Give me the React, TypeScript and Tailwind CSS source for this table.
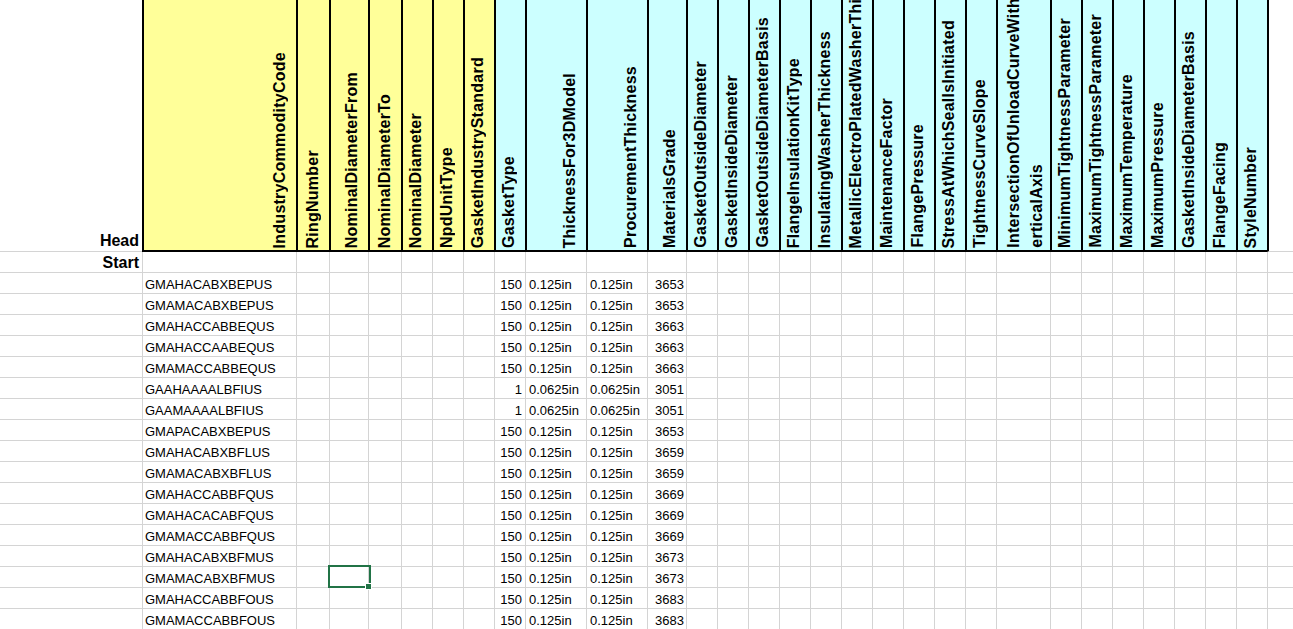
import React from 'react';

type Col = { w: string; title?: string; title2?: string; bg?: string; edge?: boolean };

const Y = 'bg-[#ffff99]';
const C = 'bg-[#ccffff]';

const cols: Col[] = [
  { w: 'w-[142px]' },
  { w: 'w-[154px]', title: 'IndustryCommodityCode', bg: Y },
  { w: 'w-[33px]', title: 'RingNumber', bg: Y },
  { w: 'w-[39px]', title: 'NominalDiameterFrom', bg: Y },
  { w: 'w-[33px]', title: 'NominalDiameterTo', bg: Y },
  { w: 'w-[31px]', title: 'NominalDiameter', bg: Y },
  { w: 'w-[31px]', title: 'NpdUnitType', bg: Y },
  { w: 'w-[31px]', title: 'GasketIndustryStandard', bg: Y },
  { w: 'w-[31px]', title: 'GasketType', bg: C },
  { w: 'w-[61px]', title: 'ThicknessFor3DModel', bg: C },
  { w: 'w-[61px]', title: 'ProcurementThickness', bg: C },
  { w: 'w-[39px]', title: 'MaterialsGrade', bg: C },
  { w: 'w-[31px]', title: 'GasketOutsideDiameter', bg: C },
  { w: 'w-[31px]', title: 'GasketInsideDiameter', bg: C },
  { w: 'w-[31px]', title: 'GasketOutsideDiameterBasis', bg: C },
  { w: 'w-[31px]', title: 'FlangeInsulationKitType', bg: C },
  { w: 'w-[31px]', title: 'InsulatingWasherThickness', bg: C },
  { w: 'w-[31px]', title: 'MetallicElectroPlatedWasherThickness', bg: C },
  { w: 'w-[31px]', title: 'MaintenanceFactor', bg: C },
  { w: 'w-[31px]', title: 'FlangePressure', bg: C },
  { w: 'w-[31px]', title: 'StressAtWhichSealIsInitiated', bg: C },
  { w: 'w-[31px]', title: 'TightnessCurveSlope', bg: C },
  { w: 'w-[54px]', title: 'IntersectionOfUnloadCurveWithV', title2: 'erticalAxis', bg: C },
  { w: 'w-[31px]', title: 'MinimumTightnessParameter', bg: C },
  { w: 'w-[31px]', title: 'MaximumTightnessParameter', bg: C },
  { w: 'w-[31px]', title: 'MaximumTemperature', bg: C },
  { w: 'w-[31px]', title: 'MaximumPressure', bg: C },
  { w: 'w-[31px]', title: 'GasketInsideDiameterBasis', bg: C },
  { w: 'w-[31px]', title: 'FlangeFacing', bg: C },
  { w: 'w-[31px]', title: 'StyleNumber', bg: C },
  { w: 'w-[31px]', edge: true },
  { w: 'w-[31px]' },
];

const rows: [string, string, string, string, string][] = [
  ['GMAHACABXBEPUS', '150', '0.125in', '0.125in', '3653'],
  ['GMAMACABXBEPUS', '150', '0.125in', '0.125in', '3653'],
  ['GMAHACCABBEQUS', '150', '0.125in', '0.125in', '3663'],
  ['GMAHACCAABEQUS', '150', '0.125in', '0.125in', '3663'],
  ['GMAMACCABBEQUS', '150', '0.125in', '0.125in', '3663'],
  ['GAAHAAAALBFIUS', '1', '0.0625in', '0.0625in', '3051'],
  ['GAAMAAAALBFIUS', '1', '0.0625in', '0.0625in', '3051'],
  ['GMAPACABXBEPUS', '150', '0.125in', '0.125in', '3653'],
  ['GMAHACABXBFLUS', '150', '0.125in', '0.125in', '3659'],
  ['GMAMACABXBFLUS', '150', '0.125in', '0.125in', '3659'],
  ['GMAHACCABBFQUS', '150', '0.125in', '0.125in', '3669'],
  ['GMAHACACABFQUS', '150', '0.125in', '0.125in', '3669'],
  ['GMAMACCABBFQUS', '150', '0.125in', '0.125in', '3669'],
  ['GMAHACABXBFMUS', '150', '0.125in', '0.125in', '3673'],
  ['GMAMACABXBFMUS', '150', '0.125in', '0.125in', '3673'],
  ['GMAHACCABBFOUS', '150', '0.125in', '0.125in', '3683'],
  ['GMAMACCABBFOUS', '150', '0.125in', '0.125in', '3683'],
];

function HeaderCell({ col, i }: { col: Col; i: number }) {
  if (i === 0) {
    return (
      <div className="w-[142px] shrink-0 h-[252px] border-b border-[#d4d4d4] flex items-end justify-end pr-[3px] pb-[1px] text-[16px] leading-[18px] font-bold">
        Head
      </div>
    );
  }
  if (!col.title) {
    return (
      <div
        className={`${col.w} shrink-0 h-[252px] border-b border-b-[#d4d4d4] ${
          col.edge ? 'border-l-2 border-l-black' : ''
        }`}
      />
    );
  }
  const two = !!col.title2;
  return (
    <div
      className={`${col.w} ${col.bg} shrink-0 h-[252px] border-l-2 border-b-2 border-black overflow-hidden flex items-end justify-end pb-[2px] ${
        two ? 'pr-[2px]' : 'pr-[7px]'
      }`}
    >
      <span
        className={`[writing-mode:vertical-rl] rotate-180 whitespace-nowrap text-[16px] font-bold tracking-[0.25px] ${
          two ? 'leading-[23px]' : 'leading-[18px]'
        }`}
      >
        {col.title}
        {two && <br />}
        {col.title2}
      </span>
    </div>
  );
}

function DataCell({ i, w, row, ri }: { i: number; w: string; row?: string[]; ri: number }) {
  let content: React.ReactNode = null;
  let align = '';
  if (row) {
    if (i === 1) {
      content = row[0];
      align = 'justify-start pl-[2px]';
    } else if (i === 8) {
      content = row[1];
      align = 'justify-end pr-[3px]';
    } else if (i === 9) {
      content = row[2];
      align = 'justify-start pl-[3px]';
    } else if (i === 10) {
      content = row[3];
      align = 'justify-start pl-[3px]';
    } else if (i === 11) {
      content = row[4];
      align = 'justify-end pr-[2px]';
    }
  }
  const selected = ri === 14 && i === 3;
  return (
    <div
      className={`${w} shrink-0 h-full relative flex items-end ${align} ${
        i > 0 ? 'border-l border-[#d4d4d4]' : ''
      }`}
    >
      {content !== null && (
        <span className="text-[13px] leading-[16px] whitespace-nowrap">{content}</span>
      )}
      {selected && (
        <div className="absolute left-[-2px] top-[-2px] w-[43px] h-[23px] border-2 border-[#217346] z-10">
          <div className="absolute right-[-3px] bottom-[-4px] w-[7px] h-[7px] bg-[#217346] border border-white" />
        </div>
      )}
    </div>
  );
}

export default function App() {
  return (
    <div className="w-[1293px] h-[629px] overflow-hidden bg-white text-black font-['Liberation_Sans',Arial,sans-serif]">
      <div className="flex w-max">
        {cols.map((c, i) => (
          <HeaderCell key={i} col={c} i={i} />
        ))}
      </div>
      <div className="flex w-max h-[21px] border-b border-[#d4d4d4]">
        {cols.map((c, i) =>
          i === 0 ? (
            <div
              key={i}
              className="w-[142px] shrink-0 h-full flex items-end justify-end pr-[3px] text-[16px] leading-[18px] font-bold"
            >
              Start
            </div>
          ) : (
            <div key={i} className={`${c.w} shrink-0 h-full border-l border-[#d4d4d4]`} />
          )
        )}
      </div>
      {rows.map((r, ri) => (
        <div key={ri} className="flex w-max h-[21px] border-b border-[#d4d4d4]">
          {cols.map((c, i) => (
            <DataCell key={i} i={i} w={c.w} row={r} ri={ri} />
          ))}
        </div>
      ))}
    </div>
  );
}
